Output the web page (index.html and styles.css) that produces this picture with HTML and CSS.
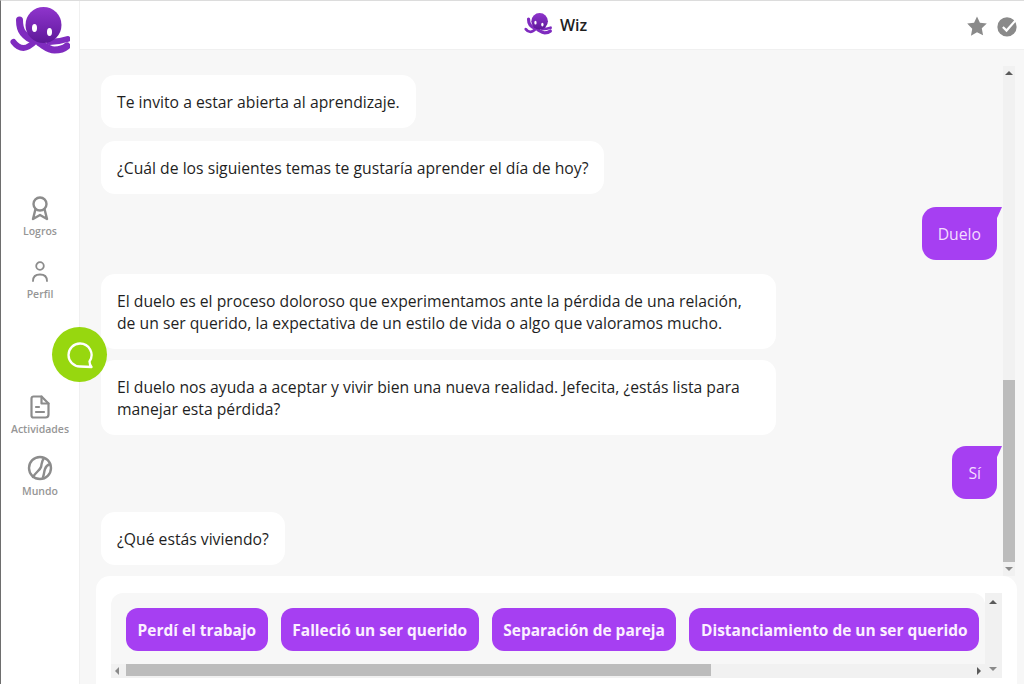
FILE: index.html
```html
<!DOCTYPE html>
<html lang="es">
<head>
    <meta charset="UTF-8">
    <meta name="viewport" content="width=device-width, initial-scale=1.0">
    <title>Wiz</title>
    <link rel="stylesheet" href="styles.css">
</head>
<body>
<div class="app">
    <nav class="sidebar">
        <svg class="logo" viewBox="0 0 60 52"><use href="#octopus"/></svg>
        <div class="nav-items">
            <a class="nav-item nav-logros" href="#">
                <svg viewBox="0 0 18 25" fill="none" stroke="#8c8c8c" stroke-width="2.400" stroke-linejoin="round">
                    <circle cx="9" cy="8" r="6.500"/>
                    <path d="M4.500 13 2 23l7-4 7 4-2.500-10"/>
                </svg>
                <span>Logros</span>
            </a>
            <a class="nav-item nav-perfil" href="#">
                <svg viewBox="0 0 18 22" fill="none" stroke="#8c8c8c" stroke-width="1.800" stroke-linecap="round">
                    <circle cx="9" cy="5" r="3.800"/>
                    <path d="M2 20c0-4.500 3-6.500 7-6.500s7 2 7 6.500"/>
                </svg>
                <span>Perfil</span>
            </a>
            <a class="nav-item nav-actividades" href="#">
                <svg viewBox="0 0 20 24" fill="none" stroke="#8c8c8c" stroke-width="2.200" stroke-linejoin="round" stroke-linecap="round">
                    <path d="M3.500 1.500h8l7 7v11a3 3 0 0 1-3 3h-12a2 2 0 0 1-2-2v-17a2 2 0 0 1 2-2z"/>
                    <path d="M11.500 1.500v7h7"/>
                    <path d="M6 12h3M6 17h8"/>
                </svg>
                <span>Actividades</span>
            </a>
            <a class="nav-item nav-mundo" href="#">
                <svg viewBox="0 0 26 26" fill="none" stroke="#8c8c8c" stroke-width="2.400" stroke-linecap="round">
                    <circle cx="13" cy="13" r="11"/>
                    <path d="M17 3c-3 4-2 6-3 9s-5 5-8 10"/>
                    <path d="M23 9c-3 1-4 2-5 5s-1 6-2 8"/>
                </svg>
                <span>Mundo</span>
            </a>
        </div>
    </nav>

    <main class="main">
        <header class="topbar">
            <svg class="logo-small" viewBox="0 0 60 52"><use href="#octopus"/></svg>
            <span class="topbar-title">Wiz</span>
            <div class="topbar-actions">
                <svg viewBox="0 0 24 24"><path fill="#8a8a8a" d="M12 1.500l3.200 6.900 7.500.900-5.500 5.200 1.400 7.500L12 18.800l-6.600 3.700 1.400-7.500L1.300 9.300l7.500-.900z"/></svg>
                <svg viewBox="0 0 24 24">
                    <circle cx="12" cy="13" r="10.500" fill="#8a8a8a"/>
                    <path d="M7.500 13l4 4L22.500 4.500" fill="none" stroke="#fff" stroke-width="2.400"/>
                </svg>
            </div>
        </header>

        <section class="chat-wrap">
            <div class="chat">
                <div class="msg bot">Te invito a estar abierta al aprendizaje.</div>
                <div class="msg bot">¿Cuál de los siguientes temas te gustaría aprender el día de hoy?</div>
                <div class="msg user">Duelo</div>
                <div class="msg bot wide">El duelo es el proceso doloroso que experimentamos ante la pérdida de una relación, de un ser querido, la expectativa de un estilo de vida o algo que valoramos mucho.</div>
                <div class="msg bot wide">El duelo nos ayuda a aceptar y vivir bien una nueva realidad. Jefecita, ¿estás lista para manejar esta pérdida?</div>
                <div class="msg user short">Sí</div>
                <div class="msg bot">¿Qué estás viviendo?</div>
            </div>
            <div class="vbar">
                <span class="arrow-up"></span>
                <div class="vbar-track"><div class="vbar-thumb"></div></div>
                <span class="arrow-down"></span>
            </div>
        </section>

        <section class="panel">
            <div class="options">
                <div class="options-body">
                    <div class="options-list">
                        <button class="option">Perdí el trabajo</button>
                        <button class="option">Falleció un ser querido</button>
                        <button class="option">Separación de pareja</button>
                        <button class="option">Distanciamiento de un ser querido</button>
                    </div>
                    <div class="hbar">
                        <span class="arrow-left"></span>
                        <div class="hbar-track"><div class="hbar-thumb"></div></div>
                        <span class="arrow-right"></span>
                    </div>
                </div>
                <div class="options-vbar">
                    <span class="arrow-up"></span>
                    <span class="arrow-down"></span>
                </div>
            </div>
        </section>
    </main>

    <div class="fab">
        <svg viewBox="0 0 28 28" fill="none" stroke="#fff" stroke-width="2.300" stroke-linejoin="round">
            <path d="M14 2.500a11.500 11.500 0 1 0 0 23c3 0 7 0 11.500 .5-1.500-2-2-3-2-5.500A11.500 11.500 0 0 0 14 2.500z"/>
        </svg>
    </div>
</div>

<!-- octopus used by both logos -->
<svg class="defs" width="0" height="0">
    <defs>
        <linearGradient id="octoHead" x1="0" y1="0" x2="0" y2="1">
            <stop offset="0" stop-color="#8f35cc"/>
            <stop offset="0.6" stop-color="#7324b0"/>
            <stop offset="1" stop-color="#5c1896"/>
        </linearGradient>
    </defs>
    <symbol id="octopus" viewBox="0 0 60 52">
        <g fill="none" stroke="#7f2bbf" stroke-linecap="round" stroke-linejoin="round">
            <path stroke-width="7" d="M9.500 13c0 6 1 10 3.500 13s6 6 10 7"/>
            <path stroke-width="6" d="M3.500 35c3 4 6 6 10 6s8-3 13-8"/>
            <path stroke-width="7" d="M29.500 36c5 3 9 7 15 7s9-1 12.500-4"/>
            <path stroke-width="6" d="M39.500 35c7 0 12-1 18-3"/>
        </g>
        <circle cx="33.500" cy="18" r="18" fill="url(#octoHead)"/>
        <ellipse cx="24.500" cy="21" rx="2.500" ry="4" fill="#fff"/>
        <ellipse cx="39.500" cy="25" rx="2.500" ry="4" fill="#fff"/>
    </symbol>
</svg>
</body>
</html>
```

FILE: styles.css
```css
html, body {
    height: 100%;
}

body {
    margin: 0;
    overflow: hidden;
    font-family: "Open Sans", "Noto Sans", Arial, sans-serif;
    background-color: #fff;
    color: #1f1f1f;
}

.defs {
    position: absolute;
}

.app {
    position: relative;
    display: flex;
    height: 684px;
    box-sizing: border-box;
    border-left: 1px solid #6e6e6e;
    border-top: 1px solid #dcdcdc;
}

/* left menu */
.sidebar {
    width: 79px;
    flex-shrink: 0;
    background-color: #fff;
    border-right: 1px solid #f0f0f0;
    box-sizing: border-box;
    display: flex;
    flex-direction: column;
    align-items: center;
}

.logo {
    width: 60px;
    height: 52px;
    margin-top: 6px;
}

.nav-items {
    margin-top: 137px;
    display: flex;
    flex-direction: column;
    align-items: center;
}

.nav-item {
    display: flex;
    flex-direction: column;
    align-items: center;
    text-decoration: none;
    color: #969696;
    font-size: 10.500px;
    font-weight: 600;
}

.nav-item span {
    margin-top: 3px;
}

.nav-logros svg {
    width: 18px;
    height: 25px;
}

.nav-perfil {
    margin-top: 23px;
}

.nav-perfil svg {
    width: 18px;
    height: 22px;
}

.nav-perfil span {
    margin-top: 4px;
}

.nav-actividades {
    margin-top: 94px;
}

.nav-actividades svg {
    width: 20px;
    height: 24px;
}

.nav-mundo {
    margin-top: 19px;
}

.nav-mundo svg {
    width: 26px;
    height: 26px;
}

.fab {
    position: absolute;
    left: 51px;
    top: 326px;
    width: 55px;
    height: 55px;
    border-radius: 50%;
    background-color: #97d70f;
    display: flex;
    align-items: center;
    justify-content: center;
}

.fab svg {
    width: 28px;
    height: 28px;
}

/* main column */
.main {
    flex: 1;
    min-width: 0;
    display: flex;
    flex-direction: column;
    background-color: #f7f7f7;
}

.topbar {
    height: 49px;
    flex-shrink: 0;
    position: relative;
    background-color: #fff;
    border-bottom: 1px solid #f0f0f0;
    display: flex;
    align-items: center;
    justify-content: center;
    box-sizing: border-box;
    padding-left: 7px;
}

.logo-small {
    width: 28px;
    height: 24px;
}

.topbar-title {
    margin-left: 8px;
    font-size: 16px;
    font-weight: 600;
}

.topbar-actions {
    position: absolute;
    right: 6px;
    top: 14px;
    display: flex;
    gap: 8px;
}

.topbar-actions svg {
    width: 22px;
    height: 22px;
}

/* chat */
.chat-wrap {
    flex: 1;
    min-height: 0;
    display: flex;
    padding-top: 16px;
    padding-right: 9px;
}

.chat {
    flex: 1;
    min-width: 0;
    display: flex;
    flex-direction: column;
    align-items: flex-start;
    padding: 9px 6px 0 21px;
}

.msg {
    box-sizing: border-box;
    background-color: #fff;
    padding: 15.500px 16px;
    font-size: 15.730px;
    line-height: 22px;
    border-radius: 14px;
    margin-bottom: 13px;
}

.msg.wide {
    width: 675px;
    margin-bottom: 11px;
}

.msg.user {
    align-self: flex-end;
    background-color: #a63ff2;
    color: #f4dcff;
    border-radius: 14px 0 14px 14px;
    margin-bottom: 14px;
    position: relative;
}

.msg.user.short {
    margin-bottom: 13px;
}

.msg.user::after {
    content: "";
    position: absolute;
    top: 0;
    right: -5px;
    border-top: 11px solid #a63ff2;
    border-right: 5px solid transparent;
}

.vbar {
    width: 12px;
    flex-shrink: 0;
    display: flex;
    flex-direction: column;
    align-items: center;
    background-color: #f1f1f1;
}

.vbar-track {
    flex: 1;
    width: 100%;
    display: flex;
    flex-direction: column;
    justify-content: flex-end;
}

.vbar-thumb {
    height: 182px;
    background-color: #bcbcbc;
}

.arrow-up, .arrow-down, .arrow-left, .arrow-right {
    width: 0;
    height: 0;
    flex-shrink: 0;
}

.arrow-up {
    margin: 5px 0;
    border-left: 4px solid transparent;
    border-right: 4px solid transparent;
    border-bottom: 4px solid #5a5a5a;
}

.arrow-down {
    margin: 5px 0;
    border-left: 4px solid transparent;
    border-right: 4px solid transparent;
    border-top: 4px solid #8a8a8a;
}

.arrow-left {
    margin: 0 4px;
    border-top: 4px solid transparent;
    border-bottom: 4px solid transparent;
    border-right: 4px solid #8a8a8a;
}

.arrow-right {
    margin: 0 4px;
    border-top: 4px solid transparent;
    border-bottom: 4px solid transparent;
    border-left: 4px solid #5a5a5a;
}

/* answer panel */
.panel {
    flex-shrink: 0;
    height: 108px;
    box-sizing: border-box;
    margin: 0 7px 0 16px;
    padding: 17px 15px 0;
    background-color: #fff;
    border-radius: 14px 14px 0 0;
}

.options {
    display: flex;
    height: 85px;
}

.options-body {
    flex: 1;
    min-width: 0;
    display: flex;
    flex-direction: column;
    background-color: #f7f7f7;
    border-radius: 12px 12px 0 0;
}

.options-list {
    flex: 1;
    display: flex;
    gap: 13px;
    padding: 15px 0 0 15px;
    white-space: nowrap;
}

.option {
    height: 43px;
    padding: 0 11.600px;
    border: 0;
    border-radius: 12px;
    background-color: #a63ff2;
    color: #fbf0ff;
    font-family: inherit;
    font-size: 15.450px;
    font-weight: 700;
}

.hbar {
    height: 14px;
    display: flex;
    align-items: center;
    background-color: #f1f1f1;
}

.hbar-track {
    flex: 1;
    height: 100%;
    margin-left: 3px;
}

.hbar-thumb {
    width: 585px;
    height: 12px;
    background-color: #bcbcbc;
}

.options-vbar {
    width: 15px;
    flex-shrink: 0;
    display: flex;
    flex-direction: column;
    justify-content: space-between;
    align-items: center;
    padding: 2px 2px 2px 0;
    background-color: #f1f1f1;
}
```
